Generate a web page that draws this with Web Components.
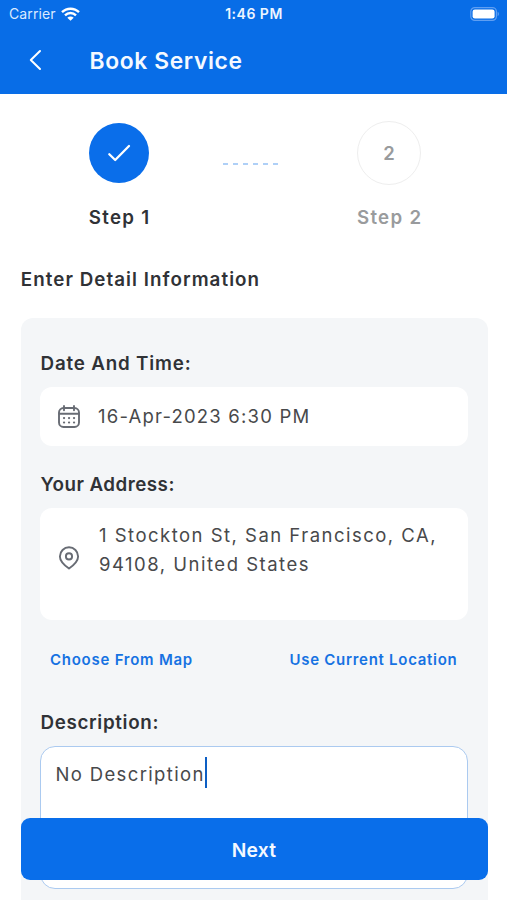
<!DOCTYPE html>
<html lang="en">
<head>
<meta charset="utf-8">
<title>Book Service</title>
<style>
html,body{margin:0;height:100%;overflow:hidden}
body{font-family:Inter,"Liberation Sans",sans-serif;color:#303236;background:#fff}
</style>
</head>
<body>
<booking-screen></booking-screen>
<script>
const define = (name, html) => customElements.define(name, class extends HTMLElement {
  constructor() {
    super();
    this.attachShadow({ mode: 'open' }).innerHTML = html;
  }
});

define('status-bar', `<style>
:host{display:grid;grid-template-columns:1fr auto 1fr;align-items:center;height:27px;padding:0 8px 0 9px;color:#fff;font-size:14px;line-height:28px}
.left{display:flex;align-items:center;gap:5px;color:#dbeaff;letter-spacing:.12px}
.left svg{margin-top:-1px}
.time{font-weight:600;color:#eef5ff;font-size:14px;letter-spacing:.5px}
.battery{justify-self:end;display:block;margin-top:-1px}
</style>
<div class="left"><span>Carrier</span><svg width="19" height="14" viewBox="0 0 19 14" fill="none" stroke="#fff" stroke-width="2.4"><path d="M1 5.2C5.8.5 13.2.5 18 5.2M4 8.3c3.100-3 7.900-3 11 0"/><path d="M9.500 13.800 6.300 10.700c1.800-1.700 4.600-1.700 6.400 0z" fill="#fff" stroke="none"/></svg></div>
<span class="time">1:46 PM</span>
<svg class="battery" width="29" height="14" viewBox="0 0 29 14"><rect x=".8" y=".6" width="25.600" height="12.800" rx="4" fill="none" stroke="#5f9ff2" stroke-width="1.200"/><rect x="2.600" y="2.400" width="22" height="9.200" rx="2.300" fill="#fff"/><path d="M27.600 4.800c1.700.7 1.700 3.700 0 4.400z" fill="#5f9ff2"/></svg>`);

define('app-header', `<style>
:host{display:block;height:94px;background:#086de7}
.bar{display:flex;align-items:center;height:67px;padding-left:28px;color:#f4f9ff}
h1{margin:0 0 0 45.500px;font-size:22.800px;font-weight:600;line-height:67px;letter-spacing:.65px}
svg{display:block;margin-top:-2px}
</style>
<status-bar></status-bar>
<div class="bar"><svg width="16" height="22" viewBox="0 0 16 22" fill="none" stroke="#fff" stroke-width="2" stroke-linecap="round" stroke-linejoin="round"><path d="M12 2 2.800 11 12 20"/></svg><h1><slot></slot></h1></div>`);

define('step-item', `<style>
:host{display:flex;flex-direction:column;align-items:center;width:64px;color:#999b9d}
.mark{box-sizing:border-box;display:grid;place-items:center;width:64px;height:64px;border:1.500px solid #eeeeee;border-radius:50%;font-size:18.500px;font-weight:600}
:host([done]) .mark{width:60px;height:60px;margin:2px;border:0;background:#0a6eea}
:host([done]){color:#303236}
.label{margin:20px -1.300px 0 0;font-size:18.700px;line-height:25px;font-weight:560;letter-spacing:1.300px;white-space:nowrap}
</style>
<div class="mark"><slot name="mark"></slot></div><div class="label"><slot></slot></div>`);

define('step-track', `<style>
:host{display:flex;align-items:flex-start;height:140px;box-sizing:border-box;padding:27px 86px 0 87px;justify-content:space-between}
.dashes{display:flex;gap:5px;margin:42px 8px 0 0}
.dashes i{width:5px;height:2px;background:#afd0f7}
step-item svg{display:block}
</style>
<step-item done><svg slot="mark" width="24" height="20" viewBox="0 0 24 20" fill="none" stroke="#fff" stroke-width="2.300" stroke-linecap="round" stroke-linejoin="round"><path d="M2.300 11.200 8.200 17 22 3"/></svg>Step 1</step-item>
<div class="dashes"><i></i><i></i><i></i><i></i><i></i><i></i></div>
<step-item><span slot="mark">2</span>Step 2</step-item>`);

define('field-group', `<style>
:host{display:block}
.label{font-size:18.800px;line-height:24px;font-weight:560;letter-spacing:var(--label-spacing,.4px);height:24px;margin-bottom:11px;padding-left:.5px;white-space:nowrap}
</style>
<div class="label"><slot name="label"></slot></div><slot></slot>`);

define('value-box', `<style>
:host{display:flex;align-items:center;box-sizing:border-box;background:#fff;border-radius:12px;padding:0 18px;color:#48494b;font-size:18.500px;line-height:29px;letter-spacing:1px;white-space:nowrap}
:host([multiline]){align-items:flex-start}
::slotted(svg){flex:none;margin-right:18px}
</style><slot></slot>`);

define('text-caret', `<style>:host{display:block;width:2.500px;height:31px;background:#0d5fc4}</style>`);
define('text-link', `<style>:host{display:block;color:#1672e2;font-size:15px;line-height:20px;font-weight:600;white-space:nowrap}</style><slot></slot>`);
define('primary-button', `<style>
:host{display:block}
button{display:block;width:100%;height:62px;border:0;border-radius:9px;padding:0;background:#096eea;color:#f4f9ff;font:600 19.300px/64px Inter,"Liberation Sans",sans-serif;letter-spacing:.2px}
</style><button><slot></slot></button>`);

define('booking-form', `<style>
:host{display:block;box-sizing:border-box;margin:0 19.500px 0 20.500px;padding:34px 19.500px 20px;height:620px;background:#f4f6f8;border-radius:12px}
.g1{--label-spacing:.82px}
.g2{--label-spacing:.47px;margin-top:27px}
.g3{--label-spacing:.66px;margin-top:41px}
.date{height:59px}
.address{height:112px;padding-top:13px}
.address svg{margin-top:25px}
.address div{margin-left:1px}
.v1{letter-spacing:1.200px}
.v2{letter-spacing:1.480px}
.v3{letter-spacing:1.500px}
.links{display:flex;justify-content:space-between;padding:30px 10.500px 0 10px}
.l1{letter-spacing:.75px}
.l2{letter-spacing:.72px}
.desc{height:143px;padding:10px 14.500px;border:1px solid #abcaf0;border-radius:15px}
.v4{margin-top:3px;letter-spacing:1.350px}
</style>
<field-group class="g1"><span slot="label">Date And Time:</span>
<value-box class="date"><svg width="22" height="24" viewBox="0 0 22 24" fill="none" stroke="#686c74" stroke-width="1.900" stroke-linecap="round"><rect x="1" y="3" width="20" height="19" rx="4.500"/><path d="M1.500 8.800h19M6 1v4.300M16 1v4.300"/><path d="M6 13.100h.1M11 13.100h.1M16 13.100h.1M6 17.500h.1M11 17.500h.1M16 17.500h.1" stroke-width="2.200"/></svg><span class="v1">16-Apr-2023 6:30 PM</span></value-box></field-group>
<field-group class="g2"><span slot="label">Your Address:</span>
<value-box class="address" multiline><svg width="22" height="24" viewBox="0 0 22 24" fill="none" stroke="#686c74" stroke-width="1.900" stroke-linejoin="round"><path d="M11 22.500C7.500 20 1.900 15.500 1.900 10.400a9.100 9.100 0 0 1 18.200 0c0 5.100-5.600 9.600-9.100 12.100z"/><circle cx="11" cy="10.400" r="3.100"/></svg><div><span class="v2">1 Stockton St, San Francisco, CA,</span><br><span class="v3">94108, United States</span></div></value-box></field-group>
<div class="links"><text-link class="l1">Choose From Map</text-link><text-link class="l2">Use Current Location</text-link></div>
<field-group class="g3"><span slot="label">Description:</span>
<value-box class="desc" multiline><span class="v4">No Description</span><text-caret></text-caret></value-box></field-group>`);

define('booking-screen', `<style>
:host{display:block;position:relative;width:507px;height:900px;overflow:hidden;background:#fff}
h2{margin:0;height:84px;padding:34px 0 0 20.800px;font-size:18.800px;line-height:24px;font-weight:560;letter-spacing:1.050px;box-sizing:border-box}
primary-button{position:absolute;left:20.500px;right:19.500px;top:818px}
</style>
<app-header>Book Service</app-header>
<step-track></step-track>
<h2>Enter Detail Information</h2>
<booking-form></booking-form>
<primary-button>Next</primary-button>`);
</script>
</body>
</html>
